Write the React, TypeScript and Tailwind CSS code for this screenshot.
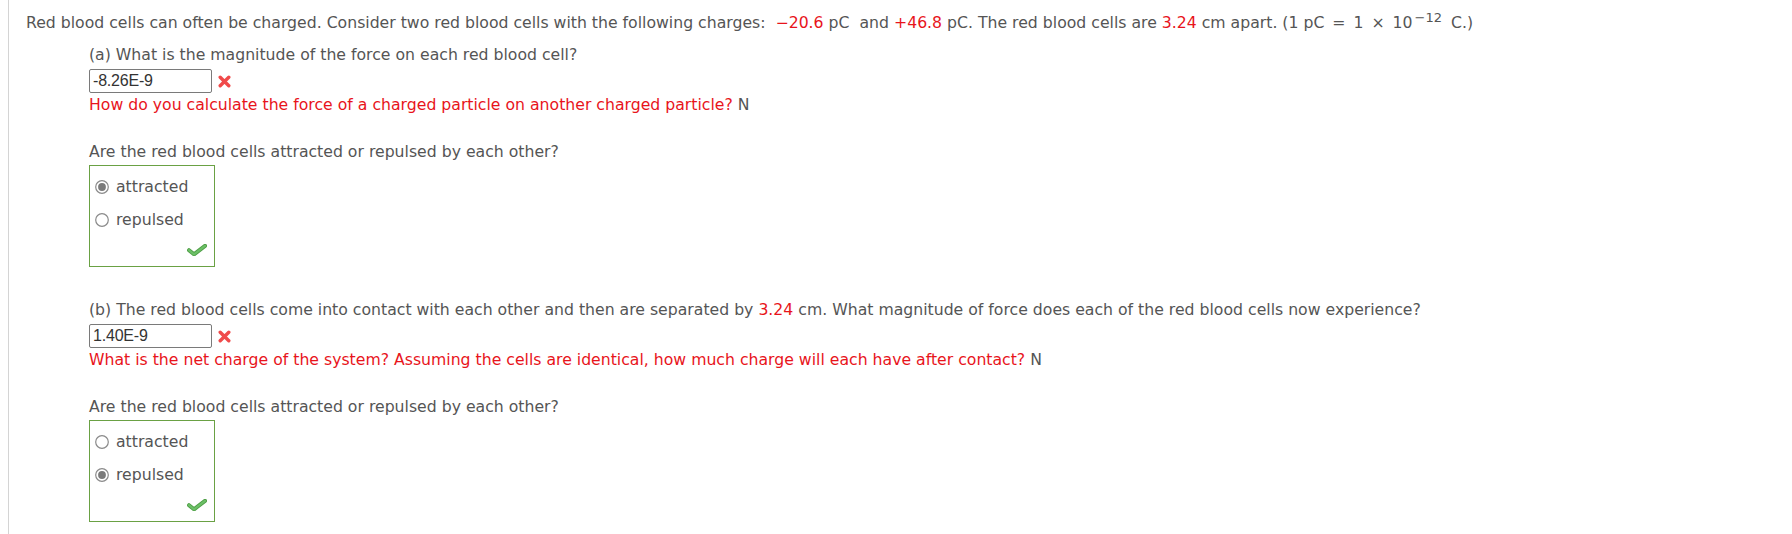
import type { ReactNode } from "react";

function RadioDot({ checked }: { checked: boolean }) {
  return (
    <svg width="14" height="14" viewBox="0 0 14 14" className="shrink-0">
      <circle cx="7" cy="7" r="6.3" fill="white" stroke="#8a8a8a" strokeWidth="1.2" />
      {checked && <circle cx="7" cy="7" r="3.9" fill="#7a7a7a" />}
    </svg>
  );
}

function WrongMark() {
  return (
    <svg width="13" height="13" viewBox="0 0 13 13" className="shrink-0">
      <path d="M2.2 2.2 L10.8 10.8 M10.8 2.2 L2.2 10.8" stroke="#f04a4a" strokeWidth="3.4" strokeLinecap="round" />
    </svg>
  );
}

function RightMark() {
  return (
    <svg width="20" height="12" viewBox="0 0 20 12">
      <path d="M2 6.2 L7 10.3 L18 1.8" fill="none" stroke="#4f9e46" strokeWidth="4" strokeLinejoin="round" strokeLinecap="round" />
      <path d="M2 6.2 L7 10.3 L18 1.8" fill="none" stroke="#6cc067" strokeWidth="2.2" strokeLinejoin="round" strokeLinecap="round" />
    </svg>
  );
}

type PartProps = {
  question: ReactNode;
  answer: string;
  hint: string;
  picked: "attracted" | "repulsed";
  className?: string;
};

function Part({ question, answer, hint, picked, className }: PartProps) {
  return (
    <div className={className}>
      <p>{question}</p>
      <div className="mt-[4px] flex items-center gap-[6px]">
        <div className="flex h-[24px] w-[123px] items-center rounded-[2px] border border-[#7a7a7a] px-[3px] font-['Liberation_Sans',Arial,sans-serif] text-[16px] tracking-[-0.2px] text-[#333]">
          {answer}
        </div>
        <WrongMark />
      </div>
      <p className="mt-[2px] text-[#e8141b]">
        {hint} <span className="text-[#555]">N</span>
      </p>

      <p className="mt-[27px]">Are the red blood cells attracted or repulsed by each other?</p>
      <div className="mt-[3px] flex h-[102px] w-[126px] flex-col border border-[#6aa144] pl-[5px] pr-[7px] pt-[4px]">
        {(["attracted", "repulsed"] as const).map((opt) => (
          <label key={opt} className="flex h-[33px] items-center gap-[7px]">
            <RadioDot checked={picked === opt} />
            <span>{opt}</span>
          </label>
        ))}
        <div className="mb-[10px] mt-auto flex justify-end">
          <RightMark />
        </div>
      </div>
    </div>
  );
}

export default function App() {
  return (
    <div className="min-h-[534px] bg-white pl-2">
      <div className="min-h-[534px] border-l border-[#d4d4d4] pl-[17px] pt-[13px] font-['DejaVu_Sans',Verdana,sans-serif] text-[15.7px] leading-[20px] text-[#555]">
        <p>
          Red blood cells can often be charged. Consider two red blood cells with the following charges:{"\u00a0 "}
          <span className="text-[#e8141b]">−20.6</span> pC{"\u00a0 "}and <span className="text-[#e8141b]">+46.8</span> pC. The
          red blood cells are <span className="text-[#e8141b]">3.24</span> cm apart. (1 pC <span className="mx-[3px]">=</span> 1{" "}
          <span className="mx-[3px]">×</span> 10
          <sup className="ml-[2px] mr-[4px] text-[13px]">−12</sup> C.)
        </p>

        <div className="pl-[63px]">
          <Part
            className="mt-[12px]"
            question="(a) What is the magnitude of the force on each red blood cell?"
            answer="-8.26E-9"
            hint="How do you calculate the force of a charged particle on another charged particle?"
            picked="attracted"
          />
          <Part
            className="mt-[33px]"
            question={
              <>
                (b) The red blood cells come into contact with each other and then are separated by{" "}
                <span className="text-[#e8141b]">3.24</span> cm. What magnitude of force does each of the red blood cells
                now experience?
              </>
            }
            answer="1.40E-9"
            hint="What is the net charge of the system? Assuming the cells are identical, how much charge will each have after contact?"
            picked="repulsed"
          />
        </div>
      </div>
    </div>
  );
}
